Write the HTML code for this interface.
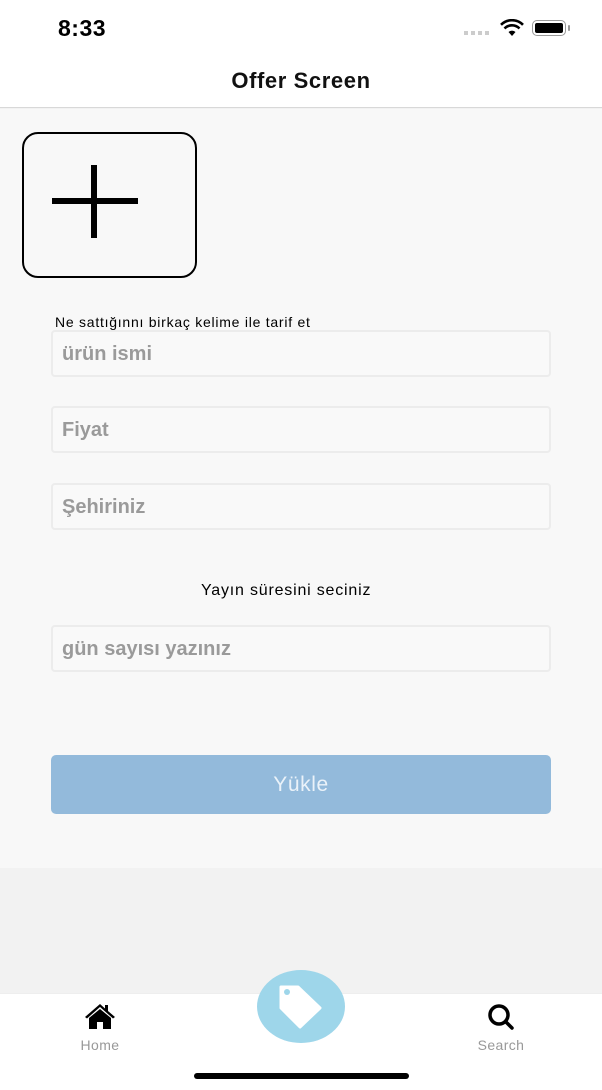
<!DOCTYPE html>
<html><head><meta charset="utf-8"><style>
*{margin:0;padding:0;box-sizing:border-box}
body{width:602px;height:1090px;position:relative;background:#f2f2f2;font-family:"Liberation Sans",sans-serif;overflow:hidden}
.a{position:absolute}
.inp{position:absolute;left:51px;width:500px;height:47px;border:2px solid #ececec;border-radius:4px;background:#f9f9f9;color:#9a9a9a;font-size:20px;font-weight:bold;letter-spacing:0;padding:11px 0 0 9px}
</style></head><body>
<div class="a" style="left:0;top:0;width:602px;height:108px;background:#fff;border-bottom:1px solid #d8d8d8"></div>
<div class="a" style="left:58px;top:15px;font-size:23px;font-weight:bold;color:#000;letter-spacing:0.5px">8:33</div>
<div class="a" style="left:464px;top:31px;width:26px;height:4px;background:repeating-linear-gradient(90deg,#ccc 0 4px,transparent 4px 7px)"></div>
<svg class="a" style="left:500px;top:19px" width="24" height="18" viewBox="0 0 24 18"><path d="M12 17l3.5-4a5 5 0 0 0-7 0z" fill="#000"/><path d="M4.5 9.5a10.5 10.5 0 0 1 15 0M1 5.8a15.5 15.5 0 0 1 22 0" stroke="#000" stroke-width="2.6" fill="none"/></svg>
<div class="a" style="left:532px;top:20px;width:34px;height:16px;border:1.5px solid #999;border-radius:5px;padding:2px"><div style="width:100%;height:100%;background:#000;border-radius:2px"></div></div>
<div class="a" style="left:568px;top:25px;width:2px;height:6px;background:#999;border-radius:1px"></div>
<div class="a" style="left:0;top:68px;width:602px;text-align:center;font-size:22px;font-weight:bold;color:#111;letter-spacing:0.6px">Offer Screen</div>
<div class="a" style="left:0;top:109px;width:602px;height:759px;background:#f8f8f8"></div>
<div class="a" style="left:22px;top:132px;width:175px;height:146px;border:2px solid #000;border-radius:16px"></div>
<div class="a" style="left:52px;top:198px;width:86px;height:6px;background:#000"></div>
<div class="a" style="left:91px;top:165px;width:6px;height:73px;background:#000"></div>
<div class="a" style="left:55px;top:314px;font-size:14px;color:#000;letter-spacing:0.75px">Ne sattığınnı birkaç kelime ile tarif et</div>
<div class="inp" style="top:330px">ürün ismi</div>
<div class="inp" style="top:406px">Fiyat</div>
<div class="inp" style="top:483px">Şehiriniz</div>
<div class="a" style="left:201px;top:582px;font-size:16px;color:#000;letter-spacing:0.8px">Yayın süresini seciniz</div>
<div class="inp" style="top:625px">gün sayısı yazınız</div>
<div class="a" style="left:51px;top:755px;width:500px;height:59px;background:#93badb;border-radius:5px;color:#eaf2f9;font-size:21px;letter-spacing:0.6px;text-align:center;line-height:59px">Yükle</div>
<div class="a" style="left:0;top:993px;width:602px;height:97px;background:#fff;border-top:1px solid #eee"></div>
<svg class="a" style="left:83px;top:1002px" width="34" height="28" viewBox="0 0 34 28"><path d="M17 2L2 15l2 1.5L17 5l13 11.5 2-1.5-7-6V3h-3v3.5z" fill="#000"/><path d="M6 16L17 7l11 9v11h-8v-7h-6v7H6z" fill="#000"/></svg>
<div class="a" style="left:65px;top:1037px;width:70px;text-align:center;font-size:14px;color:#999;letter-spacing:0.4px">Home</div>
<svg class="a" style="left:485px;top:1003px" width="32" height="28" viewBox="0 0 32 28"><circle cx="14" cy="12" r="9" stroke="#000" stroke-width="3.5" fill="none"/><path d="M21 19l6 6" stroke="#000" stroke-width="3.5" stroke-linecap="round"/></svg>
<div class="a" style="left:461px;top:1037px;width:80px;text-align:center;font-size:14px;color:#999;letter-spacing:0.4px">Search</div>
<div class="a" style="left:257px;top:970px;width:88px;height:73px;border-radius:50%;background:#9ed6ea"></div>
<svg class="a" style="left:270px;top:978px" width="60" height="56" viewBox="0 0 60 56"><path d="M11 9h17l22 21-20 19-19-19z" fill="#fff" stroke="#fff" stroke-width="3" stroke-linejoin="round"/><circle cx="17" cy="14" r="3" fill="#9ed6ea"/></svg>
<div class="a" style="left:194px;top:1073px;width:215px;height:6px;background:#000;border-radius:3px"></div>
</body></html>
